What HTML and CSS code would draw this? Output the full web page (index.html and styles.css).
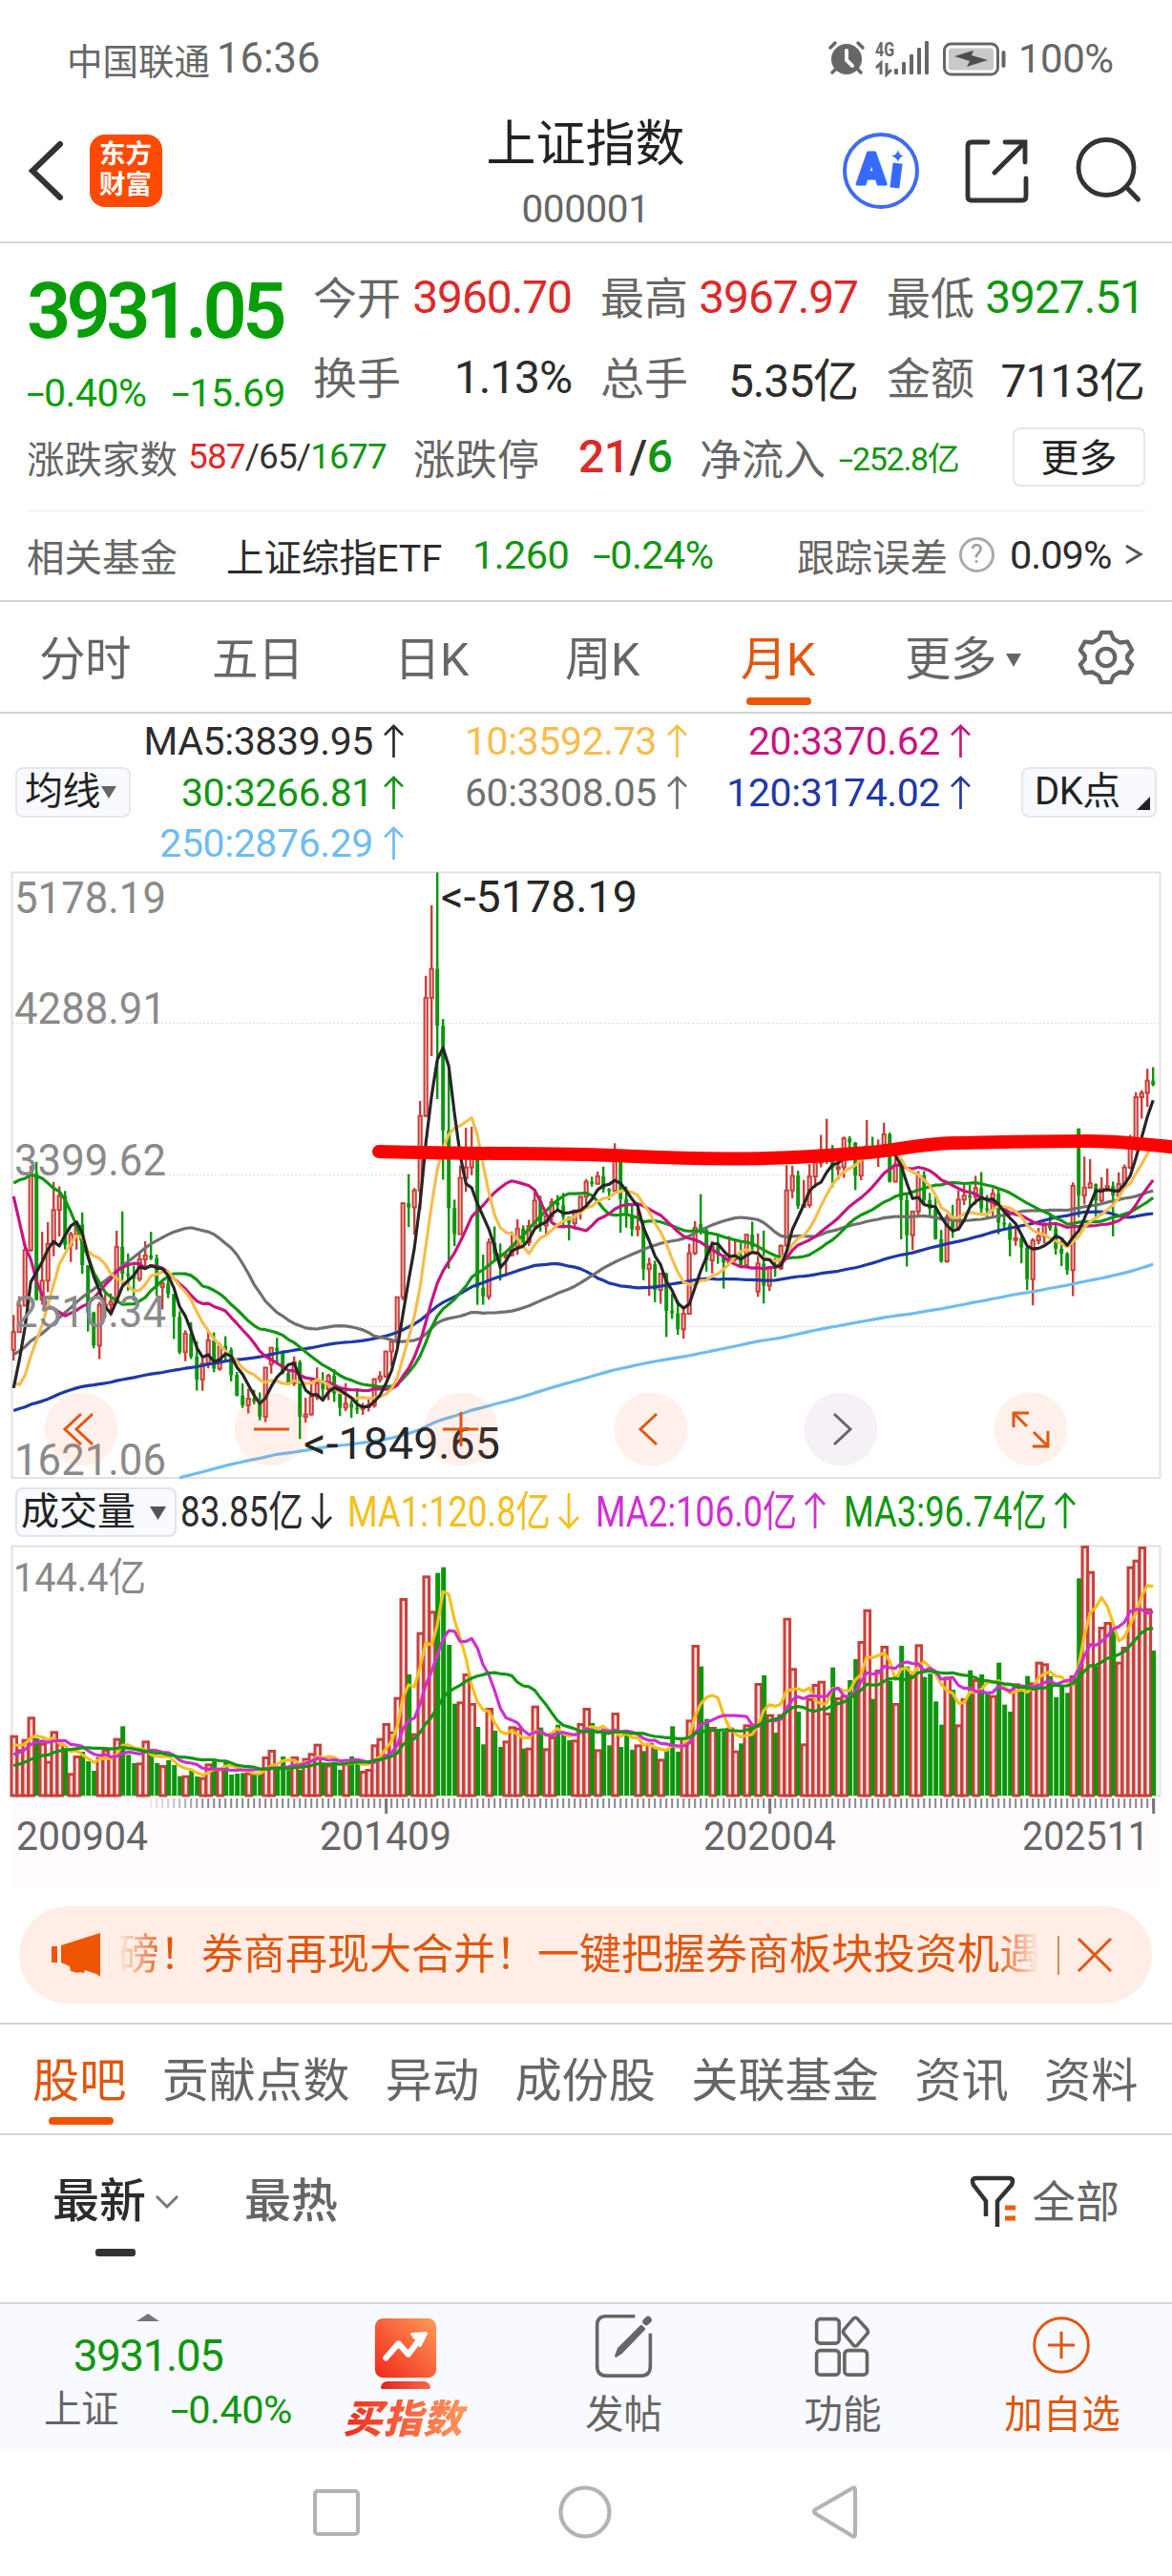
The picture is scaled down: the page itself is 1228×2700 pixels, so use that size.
FILE: index.html
```html
<!DOCTYPE html>
<html lang="zh-CN">
<head>
<meta charset="utf-8">
<title>上证指数 000001</title>
<link rel="stylesheet" href="styles.css">
</head>
<body>
<svg width="0" height="0" class="defs">
  <defs>
    <symbol id="up" viewBox="0 0 24 40"><path d="M12 38V3M2 13L12 3l10 10" fill="none" stroke="currentColor" stroke-width="2.8"/></symbol>
    <linearGradient id="hot" x1="0" y1="1" x2="1" y2="0"><stop offset="0" stop-color="#f0271c"/><stop offset="1" stop-color="#ff9b55"/></linearGradient>
  </defs>
</svg>

<header class="status">
  <span class="carrier">中国联通</span><span class="clock">16:36</span>
  <svg class="status-icons" width="190" height="44" viewBox="866 40 190 44">
    <g fill="#666866">
      <circle cx="887" cy="62" r="16"/>
      <path d="M870 50l5-5M904 50l-5-5M876 72l-4 4M898 72l4 4" stroke="#666866" stroke-width="3.500" stroke-linecap="round"/>
      <path d="M887 53v10l6 6" fill="none" stroke="#fff" stroke-width="4" stroke-linecap="round"/>
      <text x="917" y="59" font-size="20" font-weight="700" textLength="20" lengthAdjust="spacingAndGlyphs">4G</text>
      <path d="M918 71l5-5v12M929 66v12l5-5" fill="none" stroke="#666866" stroke-width="3"/>
      <rect x="937" y="72" width="4" height="6" rx="1"/><rect x="945" y="65" width="4" height="13" rx="1"/><rect x="953" y="57" width="4" height="21" rx="1"/><rect x="961" y="50" width="4" height="28" rx="1"/><rect x="969" y="43" width="4" height="35" rx="1"/>
    </g>
    <rect x="989.500" y="46" width="56" height="32" rx="7" fill="none" stroke="#666866" stroke-width="3"/>
    <rect x="994" y="50.500" width="47" height="23" rx="3" fill="#c9c8ca"/>
    <path d="M1000 59l16 5-3 6 22-7-17-5 2-5z" fill="#4c4e4c"/>
    <rect x="1049.500" y="53" width="4" height="18" rx="2" fill="#666866"/>
  </svg>
  <span class="percent">100%</span>
</header>

<header class="title-bar">
  <svg class="back" width="38" height="62" viewBox="0 0 38 62"><path d="M34 3L5 31l29 28" fill="none" stroke="#333" stroke-width="6" stroke-linecap="round"/></svg>
  <div class="logo"><span>东方</span><span>财富</span></div>
  <div class="name"><h1>上证指数</h1><p>000001</p></div>
  <svg class="title-icons" width="320" height="84" viewBox="880 137 320 84" fill="none">
    <circle cx="923" cy="179" r="38" stroke="#3f6cf0" stroke-width="4"/>
    <text x="898" y="193" font-size="46" font-weight="900" fill="#3569ff" stroke="#3569ff" stroke-width="3" stroke-linejoin="round" textLength="30" lengthAdjust="spacingAndGlyphs">A</text>
    <path d="M940 176l-2 16" stroke="#3569ff" stroke-width="10" stroke-linecap="square"/>
    <path d="M941 157q1 6 6 6.500q-5 1-6 6.500q-1-5-7-6.500q6-1 7-6.500z" fill="#3569ff"/>
    <path d="M1035 149h-17q-4 0-4 4v53q0 4 4 4h53q4 0 4-4v-19M1053 149h21v21M1073 150l-31 31" stroke="#333" stroke-width="4.800" stroke-linecap="round"/>
    <circle cx="1159" cy="175.500" r="29" stroke="#333" stroke-width="4.800"/><path d="M1180 196l12.500 13" stroke="#333" stroke-width="5" stroke-linecap="round"/>
  </svg>
</header>

<section class="quote">
  <div class="main">
    <div class="price">
      <strong>3931.05</strong>
      <div><span><i class="m">-</i>0.40%</span><span><i class="m">-</i>15.69</span></div>
    </div>
    <dl class="stats">
      <div><dt>今开</dt><dd class="red">3960.70</dd></div>
      <div><dt>最高</dt><dd class="red">3967.97</dd></div>
      <div><dt>最低</dt><dd class="green">3927.51</dd></div>
      <div><dt>换手</dt><dd>1.13%</dd></div>
      <div><dt>总手</dt><dd>5.35亿</dd></div>
      <div><dt>金额</dt><dd>7113亿</dd></div>
    </dl>
  </div>
  <div class="breadth">
    <span class="b1">涨跌家数</span><span class="b2"><i class="red">587</i>/65/<i class="green">1677</i></span>
    <span class="b3">涨跌停</span><span class="b4"><i class="red">21</i>/<i class="green">6</i></span>
    <span class="b3 b5">净流入</span><span class="b6"><i class="m">-</i>252.8亿</span>
    <button>更多</button>
  </div>
  <div class="fund">
    <span class="f1">相关基金</span><span class="f2">上证综指ETF</span><span class="f3">1.260</span><span class="f4"><i class="m">-</i>0.24%</span>
    <span class="f5">跟踪误差</span><span class="help">?</span><span class="f6">0.09%</span>
    <svg width="20" height="24" viewBox="0 0 20 24"><path d="M2 3l15 9-15 9" fill="none" stroke="#555" stroke-width="3"/></svg>
  </div>
</section>

<nav class="periods">
  <span>分时</span><span>五日</span><span>日K</span><span>周K</span><span class="on">月K</span><span class="more">更多<b class="caret"></b></span>
  <svg width="60" height="60" viewBox="-31 -31 62 62" fill="none" stroke="#666" stroke-width="4.500" stroke-linejoin="round"><path d="M-5-27h10l3 7 7 4 8-1 5 9-5 6v4l5 6-5 9-8-1-7 4-3 7h-10l-3-7-7-4-8 1-5-9 5-6v-4l-5-6 5-9 8 1 7-4z"/><circle r="9.500"/></svg>
</nav>

<section class="legend">
  <span class="chip">均线<b class="caret"></b></span>
  <div class="averages">
    <span class="ma5">MA5:3839.95<svg><use href="#up"/></svg></span>
    <span class="ma10">10:3592.73<svg><use href="#up"/></svg></span>
    <span class="ma20">20:3370.62<svg><use href="#up"/></svg></span>
    <span class="ma30">30:3266.81<svg><use href="#up"/></svg></span>
    <span class="ma60">60:3308.05<svg><use href="#up"/></svg></span>
    <span class="ma120">120:3174.02<svg><use href="#up"/></svg></span>
    <span class="ma250">250:2876.29<svg><use href="#up"/></svg></span>
  </div>
  <span class="chip dk">DK点<b></b></span>
</section>

<svg id="chart" width="1228" height="1070" viewBox="0 910 1228 1070"></svg>

<div class="banner">
  <svg width="52" height="46" viewBox="0 0 52 46" fill="#ee5500"><path d="M0 14h6v17H0zM10 13L51 0v46l-4-3-12-4-1 3-5-1-1 1-8-2-1-5-9-4z"/></svg>
  <p>磅！券商再现大合并！一键把握券商板块投资机遇</p>
  <i></i>
  <svg width="38" height="38" viewBox="0 0 38 38"><path d="M2 2l34 34M36 2L2 36" stroke="#e0570f" stroke-width="3"/></svg>
</div>

<nav class="sections"><span class="on">股吧</span><span>贡献点数</span><span>异动</span><span>成份股</span><span>关联基金</span><span>资讯</span><span>资料</span></nav>

<section class="sort">
  <span class="latest">最新<svg width="26" height="16" viewBox="0 0 26 16"><path d="M2 2l11 11L24 2" fill="none" stroke="#777" stroke-width="3"/></svg></span>
  <span class="hottest">最热</span>
  <span class="filter"><svg width="52" height="56" viewBox="0 0 52 56" fill="none" stroke="#333" stroke-width="4.500"><path d="M17 43V27L4 10q-3-7 3-7h34q6 0 3 7L29 27v27"/><path d="M37 34h11M37 45h11" stroke="#f05a14" stroke-width="5"/></svg>全部</span>
</section>

<footer class="actions">
  <div class="index"><b class="tri"></b><span class="val">3931.05</span><div><em>上证</em><span><i class="m">-</i>0.40%</span></div></div>
  <div class="act buy">
    <svg width="70" height="72" viewBox="0 0 70 72"><rect x="1" y="1" width="68" height="66" rx="9" fill="url(#hot)"/><path d="M0 67.500V73h70v-5.500z" fill="#f8faff"/><path d="M9 80q0-7 9-8" fill="none"/><path d="M13 45l14-16 11 12 12-16" fill="none" stroke="#fff" stroke-width="6.500" stroke-linecap="round" stroke-linejoin="round"/><path d="M41 19q-3-1 2-2l14-1q3 0 2 3l-6 12q-2 4-4 0-3-7-6-8z" fill="#fff"/></svg>
    <b class="stand"></b>
    <span>买指数</span>
  </div>
  <div class="act">
    <svg width="70" height="72" viewBox="0 0 70 72" fill="none" stroke="#666" stroke-width="3.800"><path d="M47 4H15Q5 4 5 14v45q0 11 10 11h39q10 0 10-11V23"/><path d="M54 15l3 3-25 26-6 4 3-8z" fill="#666" stroke-width="3" stroke-linejoin="round"/><path d="M59.500 10l2-2" stroke-width="8" stroke-linecap="round"/></svg>
    <span>发帖</span>
  </div>
  <div class="act">
    <svg width="70" height="72" viewBox="0 0 70 72" fill="none" stroke="#666" stroke-width="3.800"><rect x="6" y="7" width="25" height="27" rx="4"/><path d="M49 5.500q2 0 3 2l10 11q2 3 0 5L52 35q-3 4-6 0L36.500 23.500q-2-2 0-5L46 7.500q1-2 3-2z"/><rect x="6" y="42" width="25" height="27" rx="4"/><rect x="37" y="42" width="25" height="27" rx="4"/></svg>
    <span>功能</span>
  </div>
  <div class="act add">
    <svg width="70" height="72" viewBox="0 0 70 72" fill="none" stroke="#e0570f" stroke-width="3.200"><circle cx="34" cy="36" r="30"/><path d="M19 36h30M34 21v30"/></svg>
    <span>加自选</span>
  </div>
</footer>

<footer class="system">
  <svg width="572" height="60" viewBox="328 2603 572 60" fill="none" stroke="#b3b3b3" stroke-width="4.200"><rect x="330" y="2611" width="45" height="45" rx="3"/><circle cx="613" cy="2633" r="25.500"/><path d="M893 2608q3-2 3 2v46q0 4-3 2l-38-23q-4-3 0-5z"/></svg>
</footer>
<script src="chart.js"></script>
</body>
</html>
```

FILE: styles.css
```css
* { box-sizing: border-box; }
body { margin: 0; width: 1228px; height: 2700px; overflow: hidden; background: #fff; color: #2c2c2c; font-family: Roboto, "Noto Sans CJK SC", sans-serif; white-space: nowrap; display: flex; flex-direction: column; }
body > * { flex: none; }
svg { display: block; flex: none; }
.defs { position: absolute; }
i, em { font-style: normal; }
.m { display: inline-block; width: .44em; text-align: center; transform: scaleX(1.65); }
.red { color: #dc2a2a; }
.green { color: #119611; }

.status { height: 125px; padding: 0 0 2px 70px; display: flex; align-items: center; color: #666866; font-size: 37.500px; }
.carrier { width: 157px; }
.clock { font-size: 43.500px; flex: 1; }
.percent { font-size: 42px; width: 172px; padding-left: 11px; letter-spacing: -.5px; }

.title-bar { height: 130px; border-bottom: 2px solid #d4d4d4; padding-left: 29px; display: grid; grid-template-columns: 65px 76px 1fr 348px; }
.back { margin-top: 23px; }
.logo { margin-top: 16px; width: 76px; height: 76px; border-radius: 16px; background: #ff4a02; color: #fff; font-size: 27.500px; line-height: 32px; font-weight: 700; padding: 5px 0 0 10px; display: flex; flex-direction: column; }
.name { text-align: center; padding-left: 177px; }
.name h1 { margin: -3px 0 0; font-size: 52px; line-height: 60px; font-weight: 400; color: #222; }
.name p { margin: 12px 0 0; font-size: 40.500px; line-height: 50px; color: #666; letter-spacing: -.4px; }
.title-icons { margin-top: 12px; }

.quote { height: 376px; border-bottom: 2px solid #d4d4d4; padding: 14px 28px 0; }
.main { height: 178px; display: flex; }
.price { width: 300px; color: #089e08; }
.price strong { display: block; font-size: 81px; line-height: 90px; padding-top: 13px; font-weight: 600; letter-spacing: -4.700px; }
.price div { margin-top: 10px; font-size: 41px; line-height: 60px; display: flex; justify-content: space-between; padding-right: 29px; letter-spacing: -.5px; }
.stats { margin: 0; display: grid; grid-template-columns: 271px 270px 270px; column-gap: 30px; grid-auto-rows: 84px; }
.stats div { display: flex; justify-content: space-between; align-items: center; }
.stats dt { font-size: 46px; color: #666; margin-top: -4px; }
.stats dd { margin: 0; font-size: 48px; letter-spacing: -1.100px; }
.breadth { height: 90px; border-bottom: 3px solid #f6f6f6; display: flex; align-items: center; padding-bottom: 24px; color: #666; }
.b1 { font-size: 39.500px; width: 169px; }
.b2 { font-size: 37px; width: 236px; color: #333; letter-spacing: -.9px; }
.b3 { font-size: 44px; width: 173px; }
.b4 { font-size: 48px; font-weight: 500; width: 127px; color: #333; letter-spacing: -.5px; }
.b5 { width: 145px; }
.b6 { font-size: 34px; color: #119611; letter-spacing: -1.300px; flex: 1; }
.breadth button { width: 139px; height: 62px; border: 2px solid #e6e6e6; border-radius: 8px; background: #fff; font: 40px/52px "Noto Sans CJK SC", sans-serif; color: #222; padding: 0 0 4px; flex: none; }
.fund { height: 88px; display: flex; align-items: center; font-size: 39.500px; color: #666; }
.f1 { width: 209px; }
.f2 { width: 258px; color: #2c2c2c; }
.f3, .f4 { color: #119611; font-size: 41.500px; letter-spacing: -.6px; }
.f3 { width: 126px; }
.f4 { width: 214px; }
.f5 { width: 170px; }
.help { width: 37px; height: 37px; border: 3px solid #aaa; border-radius: 50%; font-size: 27px; line-height: 31px; text-align: center; color: #999; }
.f6 { font-size: 41.500px; color: #2c2c2c; margin-left: 16px; width: 120px; letter-spacing: -1px; }

.caret { display: inline-block; border: 8px solid transparent; border-top: 14px solid #666; border-bottom: 0; }
.periods { height: 117px; border-bottom: 2px solid #d4d4d4; display: grid; grid-template-columns: 181px 191px 179px 184px 172px 181px 1fr; padding-left: 41px; align-items: center; font-size: 48.500px; color: #666; letter-spacing: -.5px; }
.periods span { line-height: 119px; height: 114px; }
.periods .caret { margin: 0 0 9px 10px; }
.on { color: #e0570f; position: relative; }
.periods .on::after { content: ""; position: absolute; left: 6px; bottom: 7px; width: 68px; height: 8px; border-radius: 4px; background: #ee5500; }

.legend { height: 162px; display: flex; align-items: center; padding: 3px 0 0 16px; }
.chip { width: 121px; height: 53px; border: 2px solid #e3e7ee; border-radius: 8px; background: #f8faff; font-size: 40px; line-height: 47px; padding-left: 8px; color: #222; letter-spacing: -.5px; }
.chip .caret { margin: 0 0 6px 1px; border-top-width: 13px; }
.averages { width: 933px; display: grid; grid-template-columns: 287px 297px 297px; grid-auto-rows: 53.500px; font-size: 41px; letter-spacing: -.4px; }
.averages span { display: flex; justify-content: flex-end; align-items: center; gap: 10px; }
.averages svg { width: 23px; height: 38px; }
.ma5 { color: #2c2c2c; } .ma10 { color: #f6bd4b; } .ma20 { color: #c81580; } .ma30 { color: #119611; } .ma60 { color: #707070; } .ma120 { color: #2038a8; } .ma250 { color: #6fbcf0; }
.dk { width: 142px; padding-left: 12px; display: flex; justify-content: space-between; }
.dk b { align-self: flex-end; margin: 0 5px 6px 0; border-left: 14px solid transparent; border-bottom: 14px solid #222; }

.banner { margin: 18px 21px 20px 20px; height: 102px; border-radius: 51px; background: #ffede6; display: flex; align-items: center; padding-left: 34px; color: #e0570f; }
.banner p { margin: 0 19px 0 17px; width: 966px; overflow: hidden; font-size: 44px; line-height: 70px; -webkit-mask-image: linear-gradient(90deg, transparent, #000 50px, #000 920px, transparent); mask-image: linear-gradient(90deg, transparent, #000 50px, #000 920px, transparent); }
.banner i { width: 2px; height: 41px; background: #e0884e; margin-right: 18px; }

.sections { height: 118px; border-top: 2px solid #d4d4d4; border-bottom: 2px solid #d4d4d4; padding-left: 34px; display: flex; gap: 37.300px; font-size: 49.200px; line-height: 118px; color: #666; }
.sections .on::after { content: ""; position: absolute; left: 17px; bottom: 9px; width: 68px; height: 8px; border-radius: 4px; background: #ee5500; }
.sort { height: 175px; padding: 0 55px; display: flex; font-size: 49px; line-height: 140px; color: #666; }
.latest { width: 201px; color: #2c2c2c; font-weight: 500; display: flex; align-items: center; gap: 9px; height: 140px; position: relative; }
.latest::after { content: ""; position: absolute; left: 45px; top: 119px; width: 42px; height: 8px; border-radius: 3px; background: #333; }
.hottest { flex: 1; font-weight: 500; }
.filter { display: flex; align-items: center; gap: 13px; font-size: 46px; height: 140px; }

.actions { height: 154px; border-top: 2px solid #d6d9e0; background: #f8faff; display: grid; grid-template-columns: 311px 228px 229px 230px 230px; }
.index { display: flex; flex-direction: column; align-items: center; color: #119611; padding: 10px 0 0 41px; }
.tri { border: 12px solid transparent; border-bottom: 8px solid #777; border-top: 0; margin-right: 42px; }
.val { font-size: 46px; line-height: 60px; margin: 6px 42px 0 0; letter-spacing: -1.500px; }
.index div { align-self: stretch; display: flex; justify-content: space-between; line-height: 54px; font-size: 41.500px; letter-spacing: -.5px; padding: 0 5px 0 5px; }
.index em { font-size: 39.500px; color: #666; }
.act { display: flex; flex-direction: column; align-items: center; font-size: 40.500px; line-height: 54px; color: #666; padding-top: 9px; }
.act svg { margin-bottom: 12px; width: 68px; height: 68px; }
.buy svg { margin-top: 5px; margin-bottom: 0; }
.buy .stand { width: 52px; height: 8px; margin: -1px 0 4px; border-radius: 9px 9px 2px 2px; background: linear-gradient(90deg, #e0251f, #f8674a); }
.buy span { font-size: 41px; line-height: 56px; font-weight: 900; font-style: italic; padding: 0 5px 0 0; letter-spacing: 1px; background: linear-gradient(90deg, #ee2c1e, #ff9b60); -webkit-background-clip: text; background-clip: text; color: transparent; }
.add { color: #e0570f; }
.system { height: 133px; display: flex; padding: 36px 0 0 328px; }

#chart text { fill: #8a8a8a; }
```

FILE: chart.js
```js
// Month-end closes of the index since December 1990.
const closes = `127.61
129.97 133.01 120.19 113.94 114.83 137.56 143.80 178.43 180.92 218.60 259.60 292.75
313.24 364.66 381.24 445.38 1234.71 1191.19 1052.07 823.27 702.32 507.25 724.60 780.39
1198.48 1339.88 925.91 1358.78 935.48 1007.05 881.07 895.68 890.27 814.82 984.93 833.80
770.25 770.98 704.46 592.56 556.26 469.29 333.92 785.33 791.15 654.98 683.59 647.87
562.59 549.26 646.92 579.93 700.51 630.58 695.55 723.87 722.43 717.32 641.14 555.29
537.35 552.94 556.39 681.16 643.65 804.25 822.48 809.94 875.53 976.71 1032.94 917.02
964.74 1040.27 1234.62 1393.75 1285.18 1250.27 1189.76 1221.06 1097.38 1180.39 1139.63 1194.10
1222.91 1206.53 1243.02 1343.44 1411.21 1339.20 1316.92 1150.22 1242.89 1217.31 1247.42 1146.70
1134.67 1090.08 1158.05 1120.93 1279.33 1689.43 1601.46 1627.12 1570.70 1504.56 1434.97 1366.58
1535.00 1714.58 1800.22 1836.32 1894.55 1928.11 2023.54 2021.20 1910.16 1961.29 2070.61 2073.48
2065.61 1959.18 2112.78 2119.18 2214.25 2218.03 1920.32 1834.14 1764.87 1689.17 1747.99 1645.97
1491.67 1524.70 1603.91 1667.75 1515.73 1732.76 1651.59 1666.62 1581.62 1507.50 1434.18 1357.65
1499.81 1511.93 1510.58 1521.44 1576.26 1486.02 1476.74 1421.98 1367.16 1348.30 1397.22 1497.04
1590.73 1675.07 1741.62 1595.59 1555.91 1399.16 1386.20 1342.06 1396.70 1320.54 1340.77 1266.50
1191.82 1306.00 1181.24 1159.15 1060.74 1080.94 1083.03 1162.80 1155.61 1092.82 1099.26 1161.06
1258.05 1299.03 1298.30 1440.22 1641.30 1672.21 1612.73 1658.64 1752.42 1837.99 2099.29 2675.47
2786.34 2881.07 3183.98 3841.27 4109.65 3820.70 4471.03 5218.83 5552.30 5954.77 4871.78 5261.56
4383.39 4348.54 3472.71 3693.11 3433.35 2736.10 2775.72 2397.37 2293.78 1728.79 1871.16 1820.81
1990.66 2082.85 2373.21 2477.57 2632.93 2959.36 3412.06 2667.75 2779.43 2995.85 3195.30 3277.14
2989.29 3051.94 3109.11 2870.61 2592.15 2398.37 2637.50 2638.80 2655.66 2978.84 2820.18 2808.08
2790.69 2905.05 2928.11 2911.51 2743.47 2762.08 2701.73 2567.34 2359.22 2468.25 2333.41 2199.42
2292.61 2428.49 2262.79 2396.32 2372.23 2225.43 2103.63 2047.52 2086.17 2068.88 1980.12 2269.13
2385.42 2365.59 2236.62 2177.91 2300.60 1979.21 1993.80 2098.38 2174.67 2141.61 2220.50 2115.98
2033.08 2056.30 2033.31 2026.36 2039.21 2048.33 2201.56 2217.20 2363.87 2420.18 2682.84 3234.68
3210.36 3310.30 3747.90 4441.66 4611.74 4277.22 3663.73 3205.99 3052.78 3382.56 3445.40 3539.18
2737.60 2687.98 3003.92 2938.32 2916.62 2929.61 2979.34 3085.49 3004.70 3100.49 3250.03 3103.64
3159.17 3241.73 3222.51 3154.66 3117.18 3192.43 3273.03 3360.81 3348.94 3393.34 3317.19 3307.17
3480.83 3259.41 3168.90 3082.23 3095.47 2847.42 2876.40 2725.25 2821.35 2602.78 2588.19 2493.90
2584.57 2940.95 3090.76 3078.34 2898.70 2978.88 2932.51 2886.24 2905.19 2929.06 2871.98 3050.12
2976.53 2880.30 2750.30 2860.08 2852.35 2984.67 3310.01 3395.68 3218.05 3224.53 3391.76 3473.07
3483.07 3509.08 3441.91 3446.86 3615.48 3591.20 3397.36 3543.94 3568.17 3547.34 3563.89 3639.78
3361.44 3462.31 3252.20 3047.06 3186.43 3398.62 3253.24 3202.14 3024.39 2893.48 3151.34 3089.26
3255.67 3279.61 3272.86 3323.27 3204.56 3202.06 3291.04 3119.88 3110.48 3018.77 3029.67 2974.93
2788.55 3015.17 3041.17 3104.82 3086.81 2967.40 2938.75 2842.21 3336.50 3279.82 3326.46 3351.76
3250.60 3320.90 3335.75 3279.03 3347.49 3444.43 3573.21 3857.93 3882.78 3954.79 3931.05`.trim().split(/\s+/).map(Number);

// Monthly high/low from April 2009.
const ranges = `2579/2311 2688/2490 2997/2640 3454/2950 3478/2663 3068/2639 3123/2713 3361/2923 3334/3039
3307/2963 3068/2890 3129/2963 3181/2820 2856/2481 2598/2382 2656/2319 2701/2564 2704/2573 3073/2650 3187/2758 2939/2721
2868/2661 2944/2775 3012/2850 3067/2901 2933/2689 2778/2610 2826/2677 2703/2437 2600/2348 2489/2307 2536/2319 2423/2134
2324/2132 2478/2264 2476/2242 2415/2251 2453/2309 2388/2188 2244/2100 2176/2032 2145/1999 2138/2053 2123/1959 2269/1949
2387/2234 2444/2289 2369/2229 2250/2165 2334/2161 2313/1849.65 2092/1946 2198/1987 2270/2078 2242/2093 2234/2078 2260/2068
2113/1984 2177/2014 2079/1974 2146/1997 2061/1991 2087/2010 2202/2033 2248/2182 2365/2208 2423/2279 2683/2401 3239/2665
3406/3095 3324/3049 3835/3198 4572/3742 4986/4099 5178.19/3847 4317/3373 4006/2850 3256/2983 3457/3052 3678/3302 3684/3399
3539/2638 2933/2638 3028/2668 3098/2905 2998/2780 2945/2807 3069/2922 3140/2931 3105/2969 3137/2984 3301/3094 3279/3068
3174/3044 3264/3132 3283/3193 3295/3097 3154/3016 3193/3081 3276/3139 3376/3200 3391/3332 3421/3352 3450/3297 3324/3254
3587/3315 3495/3062 3333/3091 3220/3041 3219/3041 3128/2782 2915/2691 2897/2653 2827/2644 2827/2449 2703/2555 2666/2462
2630/2440 2997/2590 3129/2930 3288/3050 3087/2833 3013/2822 3048/2879 2931/2733 3042/2891 3026/2891 3000/2857 3051/2857
3127/2955 3058/2685 3074/2646 2865/2719 2914/2802 2992/2842 3458/2984 3456/3263 3425/3202 3371/3209 3465/3209 3474/3325
3637/3446 3731/3465 3577/3328 3497/3373 3626/3384 3629/3499 3595/3312 3559/3370 3723/3517 3625/3518 3610/3448 3708/3561
3651/3356 3500/3357 3500/3023 3290/2863 3188/2960 3424/3150 3424/3226 3295/3155 3274/3021 3078/2885 3170/2885 3226/3031
3310/3073 3343/3224 3342/3219 3396/3226 3418/3180 3283/3144 3322/3159 3315/3053 3187/3078 3121/2923 3090/2985 3054/2882
2971/2724 3030/2635 3090/2993 3122/3000 3174/3073 3111/2933 3015/2865 2948/2815 3358/2689 3674/3152 3509/3227 3494/3321
3351/3140 3389/3227 3439/3301 3362/3040 3417/3279 3462/3340 3636/3435 3888/3546 3899/3732 4025/3801 4034/3922`.trim().split(/\s+/).map(s => s.split('/').map(Number));

// Months whose open is well away from the previous close (month number from April 2009).
const opens = { 81: 3536, 130: 2716, 186: 3674, 196: 3567, 189: 3347, 120: 3111, 45: 2289 };

const volumes = [190,146,178,248,180,166,109,203,166,141,71,126,138,108,78,121,146,123,181,218,128,102,104,173,136,102,96,111,96,61,64,78,60,58,101,114,86,106,66,69,71,73,66,66,123,144,88,123,80,123,81,118,134,163,101,98,106,81,101,123,106,78,84,161,181,228,202,310,621,381,196,514,692,581,700,718,474,289,296,384,291,216,161,276,204,153,173,218,214,148,151,283,214,149,186,223,201,174,
176,228,276,228,146,211,158,261,153,194,144,161,140,166,146,116,141,218,138,183,239,474,406,241,216,201,201,214,142,164,224,218,354,378,256,198,256,559,401,264,164,306,351,361,261,403,309,316,363,429,486,586,304,396,471,361,291,471,406,381,476,373,383,296,223,374,333,224,306,394,366,381,326,316,418,286,264,353,346,376,356,421,416,376,309,346,323,378,683,786,706,406,531,546,526,421,468,721,742,783,589,456];

const RED = '#c8403b', GREEN = '#0b960b';
const N = 200, first = closes.length - N;
const X = i => 14.2 + 6 * i;
const Y = p => 914.5 + (5178.19 - p) * 634.5 / 3557.13;
const V = h => 1882 - h / 3;
let out = '';
const line = (pts, color, w = 3.2) => `<polyline points="${pts.join(' ')}" fill="none" stroke="${color}" stroke-width="${w}" stroke-linejoin="round"/>`;
const text = (s, x, mid, size, len, extra = '') => `<text x="${x}" y="${mid + size * .356}" font-size="${size}" textLength="${len}" lengthAdjust="spacingAndGlyphs" ${extra}>${s}</text>`;
const average = (data, at, n) => { let t = 0; for (let k = 0; k < n; k++) t += data[at - k]; return t / n; };

// frames and grid
out += '<rect x="12" y="1883" width="1204" height="96" fill="#fffbff"/>';
out += '<path d="M12.500 914.500h1203v634.500h-1203zM12.500 1620.500h1203v262h-1203z" fill="none" stroke="#e2e2e2" stroke-width="2"/>';
for (const y of [1072.5, 1231.5, 1390.5]) out += `<path d="M13 ${y}H1215" stroke="#dedede" stroke-dasharray="2 2"/>`;

// candles
const rising = [];
for (let i = 0; i < N; i++) {
  const c = closes[first + i], o = opens[i] || closes[first + i - 1], [h, l] = ranges[i], x = X(i);
  const up = rising[i] = c >= o;
  const top = Y(Math.max(o, c)), bot = Math.max(Y(Math.min(o, c)), top + 2);
  const hi = Math.min(Y(h), top), lo = Math.max(Y(l), bot);
  if (up) out += `<path d="M${x} ${hi}V${top}M${x} ${bot}V${lo}" stroke="${RED}" stroke-width="2.400"/><rect x="${x - 1.6}" y="${top}" width="3.200" height="${bot - top}" fill="#f6cfcd" stroke="${RED}" stroke-width="2"/>`;
  else out += `<path d="M${x} ${hi}V${lo}" stroke="${GREEN}" stroke-width="2.400"/><path d="M${x} ${top}V${bot}" stroke="${GREEN}" stroke-width="4"/>`;
}
for (const [n, color] of [[250, '#6fbcf0'], [120, '#2038a8'], [60, '#707070'], [30, '#119611'], [20, '#c81580'], [10, '#f6bd4b'], [5, '#262626']]) {
  const pts = [];
  for (let i = 0; i < N; i++) if (first + i + 1 >= n) pts.push(`${X(i)},${Y(average(closes, first + i, n)).toFixed(1)}`);
  out += line(pts, color);
}
[['5178.19', 941], ['4288.91', 1057], ['3399.62', 1216], ['2510.34', 1375], ['1621.06', 1530]].forEach(([s, y]) => out += text(s, 15, y, 46, 159));
out += text('&lt;-5178.19', 462, 940, 46, 206, 'style="fill:#262626"');
out += text('&lt;-1849.65', 318, 1513, 46, 206, 'style="fill:#262626"');

// chart buttons
const icons = ['M85 1482l-17 16 17 16M97 1482l-17 16 17 16', 'M266 1498h37', 'M464 1498h37M483 1480v36', 'M688 1482l-17 16 17 16', 'M874 1482l17 16-17 16', 'M1062 1496v-15h16M1062 1481l14 14M1098 1500v16h-16M1098 1516l-15-15'];
icons.forEach((d, i) => {
  const grey = i === 4;
  out += `<circle cx="${85 + 199 * i}" cy="1498" r="38.500" fill="${grey ? '#e8e0ec' : '#ff7a4a'}" fill-opacity="${grey ? .45 : .11}"/><path d="${d}" fill="none" stroke="${grey ? '#666' : '#e0570f'}" stroke-width="3"/>`;
});

// hand-drawn resistance line
out += '<path d="M397 1207C460 1209 560 1209 610 1210S690 1214 760 1214.500S880 1210 910 1208S960 1199 1000 1198S1120 1196 1140 1196S1200 1199 1236 1203" fill="none" stroke="#f00" stroke-width="14" stroke-linecap="round"/>';

// volume legend
out += '<rect x="17" y="1560" width="167" height="50" rx="7" fill="#f8faff" stroke="#dfe3ea" stroke-width="2"/>';
out += text('成交量', 22, 1584, 40, 120, 'style="fill:#222"') + '<path d="M157 1579h17l-8.500 14z" fill="#555"/>';
[['83.85亿', 189, 129, '#2c2c2c', 0], ['MA1:120.8亿', 364, 213, '#f3c01c', 0], ['MA2:106.0亿', 624, 211, '#cf2fd3', 1], ['MA3:96.74亿', 884, 213, '#119611', 1]].forEach(([s, x, len, color, up]) => {
  const ax = x + len + 19;
  out += text(s, x, 1584, 44, len, `style="fill:${color}"`);
  out += `<path d="M${ax} 1565v37M${ax - 10} ${up ? 1577 : 1590}l10 ${up ? -11 : 11}l10 ${up ? 11 : -11}" fill="none" stroke="${color}" stroke-width="2.800"/>`;
});

// volume bars
volumes.forEach((h, i) => {
  const x = X(i) + .6, y = V(h);
  out += rising[i] ? `<rect x="${x - 2.8}" y="${y + 1.5}" width="5.600" height="${h / 3 - 1.5}" fill="#fbe3e2" stroke="${RED}" stroke-width="3"/>` : `<rect x="${x - 2.6}" y="${y}" width="5" height="${h / 3}" fill="${GREEN}"/>`;
});
const padded = [...Array(12).fill(60), 80, 85, 90, 110, 130, 150, 160, 150, 145, ...volumes];
for (const [n, color] of [[5, '#f3c01c'], [10, '#cf2fd3'], [20, '#119611']]) {
  const pts = [];
  for (let i = 0; i < N; i++) pts.push(`${X(i)},${V(average(padded, i + 21, n)).toFixed(1)}`);
  out += line(pts, color);
}
out += text('144.4亿', 14, 1653, 42, 139);

// time axis
for (let i = 24; i < N; i++) out += `<rect x="${X(i) - 1}" y="1885" width="2" height="10" fill="#888" opacity="${Math.min(1, (i - 22) / 12)}"/>`;
for (const i of [65, 132, 199]) out += `<rect x="${X(i) - 1}" y="1885" width="3" height="16" fill="#777"/>`;
[['200904', 17, 138], ['201409', 335, 138], ['202004', 737, 139], ['202511', 1071, 133]].forEach(([s, x, len]) => out += text(s, x, 1924, 42, len, 'style="fill:#666"'));
document.getElementById('chart').innerHTML = out;
```
